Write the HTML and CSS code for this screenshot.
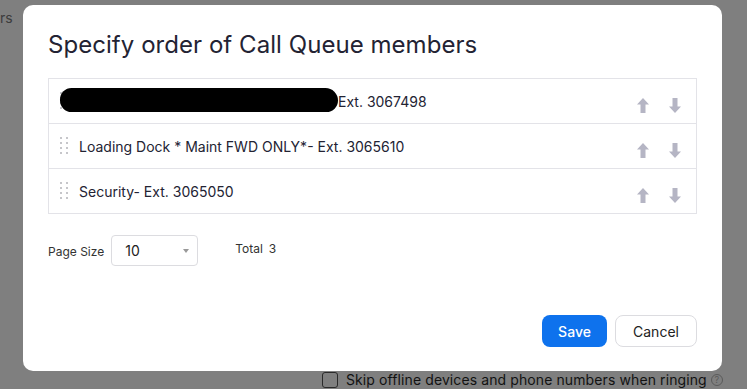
FILE: index.html
```html
<!DOCTYPE html>
<html lang="en">
<head>
<meta charset="utf-8">
<title>Specify order of Call Queue members</title>
<link rel="stylesheet" href="styles.css">
</head>
<body>
<div class="page">
  <div class="bg-top">rs</div>
  <div class="bg-bottom">
    <span class="bg-check"></span>
    <span class="bg-label">Skip offline devices and phone numbers when ringing</span>
    <span class="bg-help">?</span>
  </div>
</div>

<div class="modal" role="dialog">
  <h1 class="modal-title">Specify order of Call Queue members</h1>

  <div class="member-list">
    <div class="member-row">
      <span class="handle"><i></i><i></i><i></i><i></i><i></i><i></i><i></i><i></i></span>
      <span class="member-name"><span class="redacted"></span>Ext. 3067498</span>
      <span class="arrows">
        <svg class="arrow" viewBox="0 0 12 15"><path d="M6 0 L12 6.5 H8.5 V15 H3.5 V6.5 H0 Z"/></svg>
        <svg class="arrow" viewBox="0 0 12 15"><path d="M6 15 L12 8.5 H8.5 V0 H3.5 V8.5 H0 Z"/></svg>
      </span>
    </div>
    <div class="member-row">
      <span class="handle"><i></i><i></i><i></i><i></i><i></i><i></i><i></i><i></i></span>
      <span class="member-name">Loading Dock * Maint FWD ONLY*- Ext. 3065610</span>
      <span class="arrows">
        <svg class="arrow" viewBox="0 0 12 15"><path d="M6 0 L12 6.5 H8.5 V15 H3.5 V6.5 H0 Z"/></svg>
        <svg class="arrow" viewBox="0 0 12 15"><path d="M6 15 L12 8.5 H8.5 V0 H3.5 V8.5 H0 Z"/></svg>
      </span>
    </div>
    <div class="member-row">
      <span class="handle"><i></i><i></i><i></i><i></i><i></i><i></i><i></i><i></i></span>
      <span class="member-name">Security- Ext. 3065050</span>
      <span class="arrows">
        <svg class="arrow" viewBox="0 0 12 15"><path d="M6 0 L12 6.5 H8.5 V15 H3.5 V6.5 H0 Z"/></svg>
        <svg class="arrow" viewBox="0 0 12 15"><path d="M6 15 L12 8.5 H8.5 V0 H3.5 V8.5 H0 Z"/></svg>
      </span>
    </div>
  </div>

  <div class="pager">
    <span class="pager-label">Page Size</span>
    <span class="select">
      <span class="select-value">10</span>
      <svg class="caret" viewBox="0 0 6 4"><path d="M0 0 H6 L3 4 Z"/></svg>
    </span>
    <span class="total">Total<span class="total-num">3</span></span>
  </div>

  <div class="actions">
    <button class="btn btn-primary">Save</button>
    <button class="btn btn-default">Cancel</button>
  </div>
</div>
</body>
</html>
```

FILE: styles.css
```css
* { box-sizing: border-box; }

html, body {
  margin: 0;
  padding: 0;
}

body {
  width: 747px;
  height: 389px;
  overflow: hidden;
  background: #7f7f7f;
  font-family: Inter, "Liberation Sans", sans-serif;
  color: #222;
  position: relative;
}

.page {
  height: 389px;
  display: flex;
  flex-direction: column;
  justify-content: space-between;
}

.bg-top {
  padding: 10px 0 0 0;
  font-size: 14px;
  color: #3c3c3c;
  line-height: 16px;
}

.bg-bottom {
  display: flex;
  align-items: center;
  padding: 0 0 1px 322px;
  height: 18px;
  font-size: 14px;
  color: #121212;
}

.bg-check {
  width: 16px;
  height: 16px;
  border: 1px solid #2a2a2a;
  border-radius: 3px;
  margin-right: 8px;
}

.bg-label {
  letter-spacing: 0.1px;
}

.bg-help {
  width: 12px;
  height: 12px;
  border: 1px solid #5a5a5a;
  border-radius: 50%;
  font-size: 9px;
  line-height: 10px;
  text-align: center;
  color: #5a5a5a;
  margin-left: 4px;
}

.modal {
  position: absolute;
  left: 23px;
  top: 5px;
  width: 699px;
  height: 366px;
  background: #fff;
  border-radius: 10px;
  padding: 25px 25px 24px 25px;
  display: flex;
  flex-direction: column;
}

.modal-title {
  margin: 0;
  font-size: 24px;
  line-height: 30px;
  font-weight: 400;
  color: #232333;
  letter-spacing: 0.05px;
}

.member-list {
  margin-top: 18px;
  border: 1px solid #e3e3e8;
}

.member-row {
  height: 45px;
  display: flex;
  align-items: center;
  padding: 0 15px 0 11px;
  border-top: 1px solid #e3e3e8;
}

.member-row:first-child {
  border-top: none;
  height: 44px;
}

.handle {
  width: 8px;
  height: 18px;
  display: grid;
  grid-template-columns: 2px 2px;
  column-gap: 4px;
  row-gap: 3px;
  align-content: start;
  margin-right: 11px;
}

.handle i {
  width: 2px;
  height: 2px;
  background: #b3b3b8;
  border-radius: 1px;
}

.member-name {
  flex: 1;
  font-size: 14px;
  color: #232333;
  display: flex;
  align-items: center;
  white-space: nowrap;
}

.redacted {
  display: inline-block;
  width: 278px;
  height: 24px;
  margin-left: -19px;
  margin-top: -3px;
  background: #000;
  border-radius: 12px 13px 12px 12px;
}

.arrows {
  display: flex;
  gap: 20px;
  margin-top: 8px;
}

.arrow {
  width: 12px;
  height: 15px;
  fill: #b5b5c4;
}

.pager {
  display: flex;
  align-items: center;
  margin-top: 21px;
  font-size: 12px;
  color: #333;
}

.pager-label {
  margin-top: 1px;
  margin-right: 7px;
}

.select {
  width: 87px;
  height: 31px;
  border: 1px solid #dcdce0;
  border-radius: 4px;
  display: flex;
  align-items: center;
  justify-content: space-between;
  padding: 0 8px 0 13px;
}

.select-value {
  font-size: 14px;
  color: #222;
}

.caret {
  width: 6px;
  height: 4px;
  fill: #999;
}

.total {
  margin-left: 37px;
  margin-top: -5px;
}

.total-num {
  margin-left: 6px;
}

.actions {
  margin-top: auto;
  display: flex;
  justify-content: flex-end;
  gap: 8px;
}

.btn {
  height: 32px;
  border-radius: 8px;
  font-family: Inter, "Liberation Sans", sans-serif;
  font-size: 14px;
  padding: 0;
  cursor: pointer;
}

.btn-primary {
  width: 65px;
  background: #0e72ed;
  border: none;
  color: #fff;
  font-weight: 500;
}

.btn-default {
  width: 82px;
  background: #fff;
  border: 1px solid #dcdce0;
  color: #222;
}
```
